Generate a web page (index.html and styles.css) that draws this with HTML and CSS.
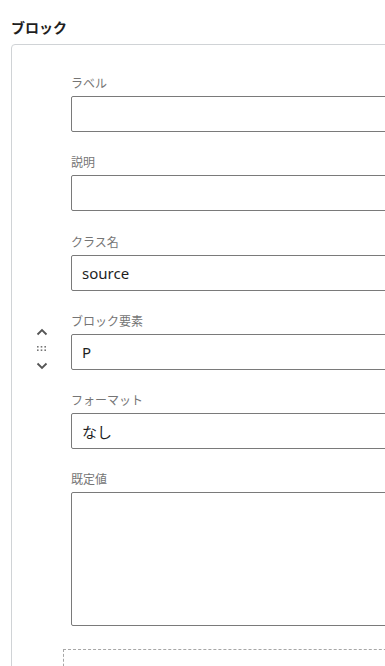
FILE: index.html
```
<!DOCTYPE html>
<html lang="ja">
<head>
    <meta charset="UTF-8">
    <meta name="viewport" content="width=device-width, initial-scale=1.0">
    <title>ブロック</title>
    <link rel="stylesheet" href="styles.css">
</head>
<body>

<h2 class="panel-title">ブロック</h2>

<div class="block-card">
    <div class="block-row">
        <div class="mover">
            <button class="mover-btn" aria-label="上へ移動">
                <svg width="12" height="8" viewBox="0 0 12 8"><path d="M1.5 6.5 L6 2 L10.5 6.5" fill="none" stroke="#555" stroke-width="1.8"/></svg>
            </button>
            <span class="drag-handle">
                <svg width="9" height="5" viewBox="0 0 9 5">
                    <rect x="0" y="0" width="1.6" height="1.6" fill="#777"/>
                    <rect x="3.7" y="0" width="1.6" height="1.6" fill="#777"/>
                    <rect x="7.4" y="0" width="1.6" height="1.6" fill="#777"/>
                    <rect x="0" y="3.4" width="1.6" height="1.6" fill="#777"/>
                    <rect x="3.7" y="3.4" width="1.6" height="1.6" fill="#777"/>
                    <rect x="7.4" y="3.4" width="1.6" height="1.6" fill="#777"/>
                </svg>
            </span>
            <button class="mover-btn" aria-label="下へ移動">
                <svg width="12" height="8" viewBox="0 0 12 8"><path d="M1.5 1.5 L6 6 L10.5 1.5" fill="none" stroke="#555" stroke-width="1.8"/></svg>
            </button>
        </div>

        <div class="fields">
            <div class="field">
                <label class="field-label">ラベル</label>
                <input class="field-input" type="text" value="">
            </div>
            <div class="field">
                <label class="field-label">説明</label>
                <input class="field-input" type="text" value="">
            </div>
            <div class="field">
                <label class="field-label">クラス名</label>
                <input class="field-input" type="text" value="source">
            </div>
            <div class="field">
                <label class="field-label">ブロック要素</label>
                <input class="field-input" type="text" value="P">
            </div>
            <div class="field">
                <label class="field-label">フォーマット</label>
                <input class="field-input" type="text" value="なし">
            </div>
            <div class="field">
                <label class="field-label">既定値</label>
                <textarea class="field-input field-textarea"></textarea>
            </div>
        </div>
    </div>

    <div class="add-zone"></div>
</div>

</body>
</html>
```

FILE: styles.css
```
body {
    margin: 0;
    background-color: #fff;
    font-family: "Noto Sans", "Noto Sans CJK JP", sans-serif;
    color: #1e1e1e;
    overflow: hidden;
}

.panel-title {
    margin: 0;
    padding: 17px 0 0 11px;
    font-size: 14px;
    line-height: 20px;
    font-weight: bold;
    font-family: "Noto Sans CJK JP", sans-serif;
}

.block-card {
    margin: 7px 0 0 11px;
    width: 440px;
    border: 1px solid #d0d3d6;
    border-radius: 4px;
    padding-top: 29px;
}

.block-row {
    display: flex;
    align-items: center;
}

.mover {
    width: 59px;
    display: flex;
    flex-direction: column;
    align-items: center;
    gap: 7px;
    margin-top: -3px;
}

.mover-btn {
    border: none;
    background: none;
    padding: 0;
    width: 14px;
    height: 10px;
    display: flex;
    justify-content: center;
    align-items: center;
    cursor: pointer;
}

.drag-handle {
    display: flex;
    height: 10px;
    align-items: center;
}

.fields {
    flex: 1;
}

.field {
    margin-bottom: 21.3px;
}

.field:last-child {
    margin-bottom: 0;
}

.field-label {
    display: block;
    font-family: "Noto Sans CJK JP", sans-serif;
    font-size: 12px;
    line-height: 18px;
    color: #757575;
    margin-bottom: 4px;
}

.field-input {
    display: block;
    box-sizing: border-box;
    width: 100%;
    height: 36px;
    margin: 0;
    padding: 0 10px;
    border: 1px solid #7a7a7a;
    border-radius: 2px;
    font-family: "Noto Sans", "Noto Sans CJK JP", sans-serif;
    font-size: 15px;
    color: #1e1e1e;
    background: #fff;
}

.field-textarea {
    height: 134px;
    resize: none;
}

.add-zone {
    margin: 23px 0 0 51px;
    height: 40px;
    border: 1px dashed #a7a7a7;
}
```
